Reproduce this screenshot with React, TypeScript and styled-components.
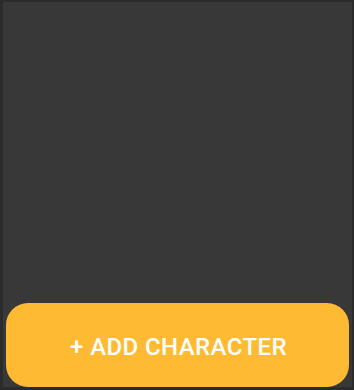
import React from 'react';
import styled, { createGlobalStyle } from 'styled-components';

const GlobalStyle = createGlobalStyle`
  html, body {
    margin: 0;
    padding: 0;
    background: #2b2b2b;
  }
  #root {
    height: 390px;
  }
`;

const Frame = styled.div`
  box-sizing: border-box;
  width: 354px;
  height: 390px;
  padding: 2px 2px 3px 3px;
  background: #2b2b2b;
  display: flex;
`;

const Panel = styled.div`
  flex: 1;
  background: #383838;
  display: flex;
  flex-direction: column;
  justify-content: flex-end;
  padding: 0 3px 0 3px;
`;

const AddButton = styled.button`
  height: 84px;
  padding: 3px 0 0 2px;
  border: none;
  border-radius: 22px;
  background: #ffba33;
  color: #ffffff;
  font-family: Roboto, 'Liberation Sans', sans-serif;
  font-weight: 500;
  font-size: 24px;
  letter-spacing: 0.4px;
  cursor: pointer;
  display: flex;
  align-items: center;
  justify-content: center;
`;

const App: React.FC = () => (
  <>
    <GlobalStyle />
    <Frame>
      <Panel>
        <AddButton>+ ADD CHARACTER</AddButton>
      </Panel>
    </Frame>
  </>
);

export default App;
